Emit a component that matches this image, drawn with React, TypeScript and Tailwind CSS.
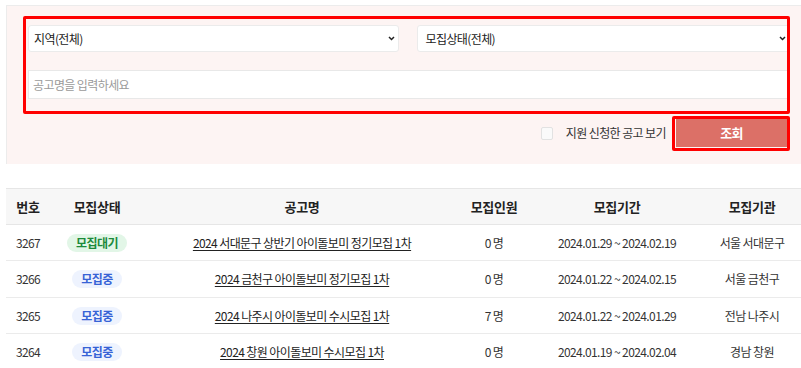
import React from "react";

const rows = [
  { no: "3267", status: "대기", title: "2024 서대문구 상반기 아이돌보미 정기모집 1차", cnt: "0 명", period: "2024.01.29 ~ 2024.02.19", org: "서울 서대문구", h: "h-[36px]" },
  { no: "3266", status: "중", title: "2024 금천구 아이돌보미 정기모집 1차", cnt: "0 명", period: "2024.01.22 ~ 2024.02.15", org: "서울 금천구", h: "h-[37px]" },
  { no: "3265", status: "중", title: "2024 나주시 아이돌보미 수시모집 1차", cnt: "7 명", period: "2024.01.22 ~ 2024.01.29", org: "전남 나주시", h: "h-[36px]" },
  { no: "3264", status: "중", title: "2024 창원 아이돌보미 수시모집 1차", cnt: "0 명", period: "2024.01.19 ~ 2024.02.04", org: "경남 창원", h: "h-[37px]" },
];

const Chevron = () => (
  <svg width="7" height="5" viewBox="0 0 7 5" className="shrink-0">
    <path d="M1 1l2.5 2.5L6 1" fill="none" stroke="#222" strokeWidth="1.5" />
  </svg>
);

export default function App() {
  return (
    <div
      className="relative w-[801px] h-[368px] overflow-hidden bg-white text-[12px] tracking-[-0.6px] text-[#333]"
      style={{ fontFamily: '"Noto Sans CJK KR", "Noto Sans", sans-serif' }}
    >
      <div className="pt-[5px] pl-[6px] w-[830px]">
        {/* filter panel */}
        <div className="w-[802px] bg-[#fdf4f3] border-t border-l border-[#ececec] pt-[19px] pl-[21px] pr-[18px] pb-[17px]">
          <div className="flex gap-[18px]">
            <div className="flex items-center justify-between w-[371px] h-[27px] bg-white border border-[#ebebeb] rounded-[3px] pl-[5px] pr-[3px] text-[#222]">
              <span>지역(전체)</span>
              <Chevron />
            </div>
            <div className="flex items-center justify-between w-[374px] h-[27px] bg-white border border-[#ebebeb] rounded-[3px] pl-[8px] pr-[3px] text-[#222]">
              <span>모집상태(전체)</span>
              <Chevron />
            </div>
          </div>
          <div className="mt-[18px] flex items-center h-[29px] bg-white border border-[#e8e8e8] pl-[4px] text-[#9a9a9a]">
            공고명을 입력하세요
          </div>
          <div className="mt-[20px] flex items-center justify-end pr-[3px]">
            <div className="w-[12px] h-[13px] border border-[#e2e2e2] bg-[#fafafa] rounded-[2px]" />
            <span className="ml-[13px] text-[#333]">지원 신청한 공고 보기</span>
            <div className="ml-[10px] w-[111px] h-[28px] bg-[#dc7067] flex items-center justify-center text-white font-bold text-[13px]">
              조회
            </div>
          </div>
        </div>

        {/* table */}
        <div className="mt-[24px] w-[802px]">
          <div className="flex h-[37px] items-center bg-[#f7f7f7] border-t border-b border-[#e6e6e6] font-bold text-[13px] tracking-[-0.3px] text-[#222]">
            <div className="w-[44px] text-center">번호</div>
            <div className="w-[94px] text-center">모집상태</div>
            <div className="w-[316px] text-center">공고명</div>
            <div className="w-[68px] text-center">모집인원</div>
            <div className="w-[178px] text-center">모집기간</div>
            <div className="w-[92px] text-center">모집기관</div>
          </div>
          {rows.map((r) => (
            <div key={r.no} className={`flex ${r.h} items-center border-b border-[#ebebeb]`}>
              <div className="w-[44px] text-center">{r.no}</div>
              <div className="w-[94px] flex justify-center">
                {r.status === "대기" ? (
                  <span className="w-[60px] h-[18px] rounded-full bg-[#e2f6e7] text-[#1c8a3a] font-bold text-[12px] flex items-center justify-center">
                    모집대기
                  </span>
                ) : (
                  <span className="w-[50px] h-[18px] rounded-full bg-[#eef3fe] text-[#3763d6] font-bold text-[12px] flex items-center justify-center">
                    모집중
                  </span>
                )}
              </div>
              <div className="w-[316px] text-center">
                <span className="underline underline-offset-2 text-[#222]">{r.title}</span>
              </div>
              <div className="w-[68px] text-center">{r.cnt}</div>
              <div className="w-[178px] text-center">{r.period}</div>
              <div className="w-[92px] text-center">{r.org}</div>
            </div>
          ))}
        </div>
      </div>

      {/* red annotation outlines */}
      <div className="absolute left-[23px] top-[16px] w-[767px] h-[98px] border-[3px] border-[#ff0000] rounded-[2px]" />
      <div className="absolute left-[672px] top-[116px] w-[118px] h-[35px] border-[3px] border-[#ff0000] rounded-[2px]" />
    </div>
  );
}
